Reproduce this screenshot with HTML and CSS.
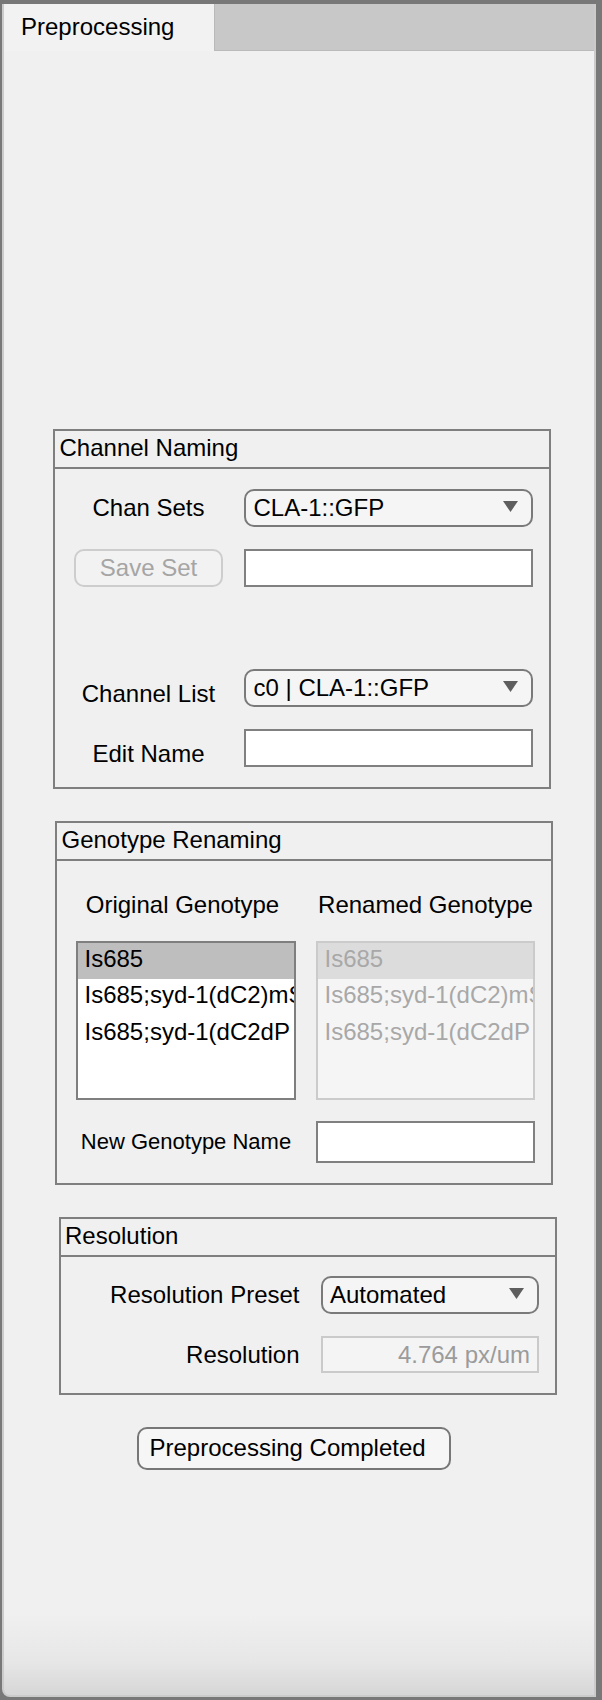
FILE: index.html
```html
<!DOCTYPE html>
<html>
<head>
<meta charset="utf-8">
<title>Preprocessing</title>
<link rel="stylesheet" href="styles.css">
</head>
<body>
<div class="window">
  <div class="tabbar">
    <div class="tab">Preprocessing</div>
    <div class="tabrest"></div>
  </div>
  <div class="content">
    <section class="panel panel-chan">
      <div class="panel-title">Channel Naming</div>
      <div class="chan-body">
        <div class="row">
          <div class="lbl">Chan Sets</div>
          <div class="dropdown dd-wide"><span>CLA-1::GFP</span><svg class="arrow" viewBox="0 0 15 11" width="15" height="11"><path d="M0 0H15L7.5 11Z"/></svg></div>
        </div>
        <div class="row row-gap">
          <div class="btn-disabled">Save Set</div>
          <div class="field field-wide"></div>
        </div>
        <div class="row row-gap-lg">
          <div class="lbl lbl-low">Channel List</div>
          <div class="dropdown dd-wide"><span>c0 | CLA-1::GFP</span><svg class="arrow" viewBox="0 0 15 11" width="15" height="11"><path d="M0 0H15L7.5 11Z"/></svg></div>
        </div>
        <div class="row row-gap">
          <div class="lbl lbl-low">Edit Name</div>
          <div class="field field-wide"></div>
        </div>
      </div>
    </section>

    <section class="panel panel-geno">
      <div class="panel-title">Genotype Renaming</div>
      <div class="geno-body">
        <div class="geno-grid geno-heads">
          <div class="head head-orig">Original Genotype</div>
          <div class="head">Renamed Genotype</div>
        </div>
        <div class="geno-grid geno-lists">
          <div class="listbox">
            <div class="item selected">Is685</div>
            <div class="item">Is685;syd-1(dC2)mS</div>
            <div class="item">Is685;syd-1(dC2dP</div>
          </div>
          <div class="listbox listbox-disabled">
            <div class="item selected">Is685</div>
            <div class="item">Is685;syd-1(dC2)mS</div>
            <div class="item">Is685;syd-1(dC2dP</div>
          </div>
        </div>
        <div class="geno-grid geno-new">
          <div class="lbl-small">New Genotype Name</div>
          <div class="field field-full"></div>
        </div>
      </div>
    </section>

    <section class="panel panel-res">
      <div class="panel-title">Resolution</div>
      <div class="res-body">
        <div class="res-row">
          <div class="lbl-right">Resolution Preset</div>
          <div class="dropdown dd-narrow"><span>Automated</span><svg class="arrow" viewBox="0 0 15 11" width="15" height="11"><path d="M0 0H15L7.5 11Z"/></svg></div>
        </div>
        <div class="res-row res-row-2">
          <div class="lbl-right">Resolution</div>
          <div class="readonly">4.764 px/um</div>
        </div>
      </div>
    </section>

    <div class="done-btn">Preprocessing Completed</div>
  </div>
</div>
</body>
</html>
```

FILE: styles.css
```css
html, body {
  margin: 0;
  padding: 0;
}
body {
  width: 602px;
  height: 1700px;
  overflow: hidden;
  background: #787878;
  font-family: "Liberation Sans", Arial, Helvetica, sans-serif;
  font-size: 24px;
  color: #000;
}
.window {
  box-sizing: border-box;
  margin: 4px 0 0 2px;
  width: 594px;
  height: 1693px;
  border: 2px solid #cbcbcb;
  border-top: none;
  border-bottom-left-radius: 8px;
  background: linear-gradient(to bottom, #f0f0f0 0, #f0f0f0 1610px, #e6e6e6 1660px, #d6d6d6 100%);
  display: flex;
  flex-direction: column;
}
.tabbar {
  display: flex;
  height: 47px;
  flex: none;
}
.tab {
  box-sizing: border-box;
  width: 210px;
  background: #f2f2f2;
  padding: 9px 0 0 17px;
  line-height: 28px;
}
.tabrest {
  flex: 1;
  background: #c8c8c8;
  border-left: 1px solid #bababa;
  border-bottom: 1px solid #bababa;
}
.content {
  display: flex;
  flex-direction: column;
  align-items: flex-start;
}

/* panels */
.panel {
  box-sizing: border-box;
  width: 498px;
  border: 2px solid #7f7f7f;
}
.panel-title {
  height: 36px;
  line-height: 34px;
  padding-left: 4.5px;
  border-bottom: 2px solid #7f7f7f;
  white-space: nowrap;
}
.panel-chan {
  margin: 378px 0 0 49px;
  height: 360px;
}
.panel-geno {
  margin: 32px 0 0 51px;
  height: 364px;
}
.panel-res {
  margin: 32px 0 0 54.5px;
  height: 178px;
}

/* channel naming */
.chan-body {
  padding: 20px 0 0 19px;
}
.row {
  display: flex;
  align-items: flex-start;
  gap: 21px;
  height: 38px;
}
.row-gap { margin-top: 22px; }
.row-gap-lg { margin-top: 82px; }
.lbl {
  width: 149px;
  text-align: center;
  line-height: 38px;
  white-space: nowrap;
}
.lbl-low { padding-top: 6px; }

.dropdown {
  box-sizing: border-box;
  height: 38px;
  border: 2px solid #7a7a7a;
  border-radius: 10px;
  background: #f5f5f5;
  display: flex;
  align-items: center;
  justify-content: space-between;
  padding: 0 13px 0 7.5px;
  line-height: 34px;
  white-space: nowrap;
}
.dd-wide { width: 289px; }
.dd-narrow { width: 218px; }
.arrow {
  flex: none;
  margin-bottom: 3px;
  fill: #5e5e5e;
}
.field {
  box-sizing: border-box;
  height: 38px;
  border: 2px solid #808080;
  background: #fff;
}
.field-wide { width: 289px; }
.field-full { width: 219px; height: 42px; }
.btn-disabled {
  box-sizing: border-box;
  width: 149px;
  height: 38px;
  border: 2px solid #cdcdcd;
  border-radius: 10px;
  background: #f2f2f2;
  color: #a5a5a5;
  text-align: center;
  line-height: 34px;
}

/* genotype renaming */
.geno-body {
  padding: 27px 0 0 19px;
}
.geno-grid {
  display: grid;
  grid-template-columns: 220px 219px;
  column-gap: 20px;
}
.geno-heads { height: 34px; }
.head {
  line-height: 34px;
  text-align: center;
  white-space: nowrap;
}
.head-orig { padding-right: 7px; }
.geno-lists {
  margin-top: 18.5px;
  height: 159px;
}
.listbox {
  box-sizing: border-box;
  height: 159px;
  border: 2px solid #7f7f7f;
  background: #fff;
  overflow: hidden;
}
.item {
  height: 36.67px;
  line-height: 32px;
  padding-left: 6.5px;
  white-space: nowrap;
  overflow: hidden;
}
.item.selected { background: #bebebe; }
.listbox-disabled {
  border-color: #cbcbcb;
  background: #f5f5f5;
  color: #a8a8a8;
}
.listbox-disabled .item.selected { background: #dcdcdc; }
.geno-new {
  margin-top: 21.5px;
  height: 42px;
}
.lbl-small {
  font-size: 22px;
  line-height: 42px;
  text-align: center;
  white-space: nowrap;
}

/* resolution */
.res-body {
  padding-top: 18.5px;
}
.res-row {
  display: flex;
  gap: 21px;
  height: 38px;
}
.res-row-2 {
  margin-top: 22.5px;
  height: 37px;
}
.lbl-right {
  width: 239px;
  text-align: right;
  line-height: 38px;
  white-space: nowrap;
}
.res-row-2 .lbl-right { line-height: 37px; }
.readonly {
  box-sizing: border-box;
  width: 218px;
  height: 37px;
  border: 2px solid #cacaca;
  background: #f4f4f4;
  color: #9b9b9b;
  text-align: right;
  padding-right: 6.5px;
  line-height: 33px;
  white-space: nowrap;
}

/* bottom button */
.done-btn {
  box-sizing: border-box;
  margin: 32px 0 0 133px;
  width: 314px;
  height: 42.5px;
  border: 2px solid #777;
  border-radius: 10px;
  background: #f6f6f6;
  line-height: 38.5px;
  padding-left: 10.5px;
  white-space: nowrap;
}
```
